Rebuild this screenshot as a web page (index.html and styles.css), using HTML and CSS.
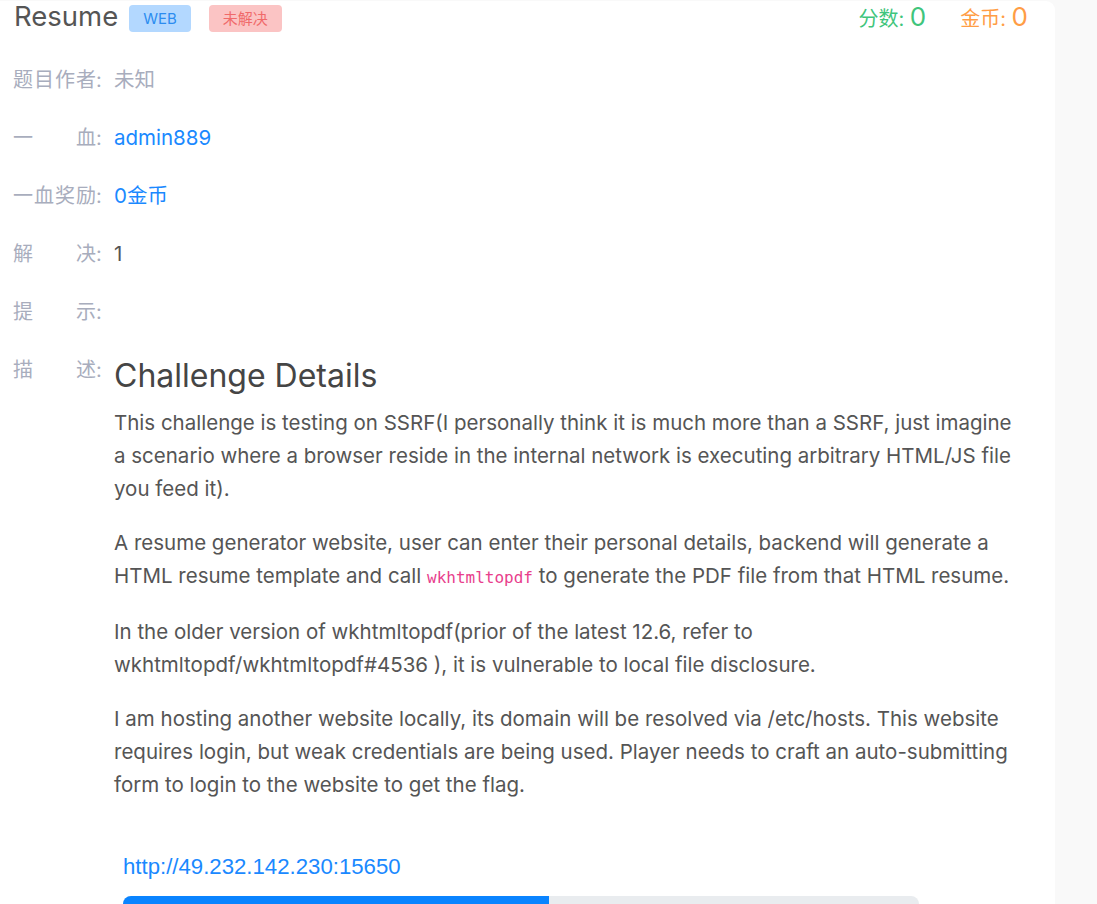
FILE: index.html
```html
<!DOCTYPE html>
<html lang="zh-CN">
<head>
    <meta charset="UTF-8">
    <meta name="viewport" content="width=device-width, initial-scale=1.0">
    <title>Resume</title>
    <link rel="stylesheet" href="styles.css">
</head>
<body>

    <div class="card">
        <!-- Title with category and status tags, score on the right -->
        <div class="card-head">
            <div class="title-wrap">
                <span class="title">Resume</span>
                <span class="tag tag-web">WEB</span>
                <span class="tag tag-status">未解决</span>
            </div>
            <div class="stats">
                <span class="stat stat-score">分数: <b>0</b></span>
                <span class="stat stat-coin">金币: <b>0</b></span>
            </div>
        </div>

        <!-- Challenge info rows -->
        <div class="info-row">
            <span class="info-label"><span class="label-text">题目作者</span>:</span>
            <span class="info-value muted">未知</span>
        </div>
        <div class="info-row">
            <span class="info-label"><span class="label-text">一血</span>:</span>
            <span class="info-value link">admin889</span>
        </div>
        <div class="info-row">
            <span class="info-label"><span class="label-text">一血奖励</span>:</span>
            <span class="info-value link">0金币</span>
        </div>
        <div class="info-row">
            <span class="info-label"><span class="label-text">解决</span>:</span>
            <span class="info-value">1</span>
        </div>
        <div class="info-row">
            <span class="info-label"><span class="label-text">提示</span>:</span>
            <span class="info-value"></span>
        </div>
        <div class="info-row">
            <span class="info-label"><span class="label-text">描述</span>:</span>
            <div class="info-value desc">
                <h3>Challenge Details</h3>
                <p>This challenge is testing on SSRF(I personally think it is much more than a SSRF, just imagine a scenario where a browser reside in the internal network is executing arbitrary HTML/JS file you feed it).</p>
                <p>A resume generator website, user can enter their personal details, backend will generate a HTML resume template and call <code>wkhtmltopdf</code> to generate the PDF file from that HTML resume.</p>
                <p>In the older version of wkhtmltopdf(prior of the latest 12.6, refer to wkhtmltopdf/wkhtmltopdf#4536 ), it is vulnerable to local file disclosure.</p>
                <p>I am hosting another website locally, its domain will be resolved via /etc/hosts. This website requires login, but weak credentials are being used. Player needs to craft an auto-submitting form to login to the website to get the flag.</p>
            </div>
        </div>

        <!-- Instance address and remaining time -->
        <div class="instance">
            <a class="instance-url">http://49.232.142.230:15650</a>
            <div class="progress">
                <div class="progress-bar" style="width: 53.5%"></div>
            </div>
        </div>
    </div>

</body>
</html>
```

FILE: styles.css
```css
body {
    margin: 0;
    padding: 0;
    background-color: #f9f9f9;
    font-family: 'Inter', 'Noto Sans CJK SC', sans-serif;
    overflow: hidden;
}

.card {
    width: 1042px;
    margin-top: 1px;
    padding: 0 0 40px 13px;
    background-color: #fff;
    border-radius: 0 9px 0 0;
}

.card-head {
    display: flex;
    justify-content: space-between;
    align-items: center;
    height: 34px;
    padding-right: 27px;
}

.title-wrap {
    display: flex;
    align-items: center;
}

.title {
    font-size: 27.5px;
    color: #555;
    margin-left: 1px;
    margin-right: 11px;
    margin-top: -4px;
}

.tag {
    display: inline-block;
    height: 27px;
    line-height: 27px;
    padding: 0 14px;
    border-radius: 4px;
    font-size: 15px;
    margin-right: 18px;
}

.tag-web {
    background-color: #b3d8ff;
    color: #2b8cf0;
}

.tag-status {
    background-color: #fbc4c4;
    color: #f06a6a;
}

.stats {
    display: flex;
    gap: 34px;
    margin-top: -4px;
}

.stat {
    font-size: 20px;
}

.stat b {
    font-weight: normal;
    font-size: 26px;
}

.stat-score {
    color: #3fc57c;
}

.stat-coin {
    color: #ff9d45;
}

.info-row {
    display: flex;
    align-items: flex-start;
    font-size: 20.5px;
    line-height: 26px;
    margin-top: 32px;
}

.info-label {
    flex-shrink: 0;
    width: 101px;
    color: #a8adbd;
    font-size: 20px;
}

.label-text {
    display: inline-block;
    width: 83px;
    text-align: justify;
    text-align-last: justify;
}

.info-value {
    color: #555;
}

.info-value.muted {
    color: #a8adbd;
}

.info-value.link {
    color: #1a89ff;
}

.desc {
    width: 908px;
    color: #555;
}

.desc h3 {
    font-size: 32px;
    font-weight: normal;
    line-height: 38px;
    margin: 0 0 11px;
    color: #454545;
}

.desc p {
    font-size: 20.5px;
    line-height: 33px;
    margin: 0 0 21px;
}

.desc code {
    font-family: 'DejaVu Sans Mono', monospace;
    font-size: 16px;
    color: #e83e8c;
}

.instance {
    margin: 32px 0 0 110px;
    width: 796px;
}

.instance-url {
    display: block;
    font-family: 'Liberation Sans', Arial, sans-serif;
    font-size: 22.2px;
    color: #1a89ff;
    line-height: 26px;
    margin-bottom: 16px;
}

.progress {
    height: 16px;
    background-color: #e9ecef;
    border-radius: 8px;
    overflow: hidden;
}

.progress-bar {
    height: 100%;
    background-color: #0a84ff;
}
```
